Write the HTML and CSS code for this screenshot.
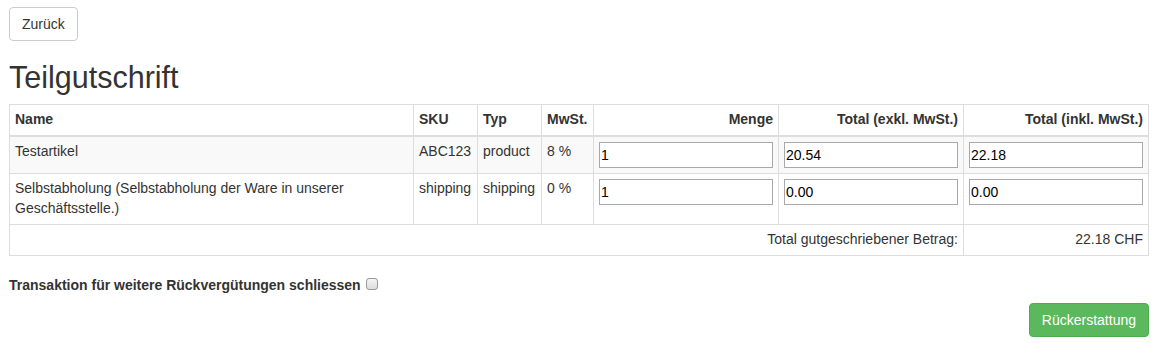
FILE: index.html
```html
<!DOCTYPE html>
<html lang="de">
<head>
  <meta charset="UTF-8" />
  <title>Teilgutschrift</title>
  <link rel="stylesheet" href="styles.css">
</head>
<body>
  <div class="page">
    <a href="#" class="btn btn-default">Zurück</a>

    <h2>Teilgutschrift</h2>

    <table class="refund-table">
      <colgroup>
        <col class="col-name">
        <col class="col-sku">
        <col class="col-type">
        <col class="col-tax">
        <col class="col-qty">
        <col class="col-total">
        <col class="col-total">
      </colgroup>
      <thead>
        <tr>
          <th>Name</th>
          <th>SKU</th>
          <th>Typ</th>
          <th>MwSt.</th>
          <th class="right">Menge</th>
          <th class="right">Total (exkl. MwSt.)</th>
          <th class="right">Total (inkl. MwSt.)</th>
        </tr>
      </thead>
      <tbody>
        <tr>
          <td>Testartikel</td>
          <td>ABC123</td>
          <td>product</td>
          <td>8 %</td>
          <td><input type="text" value="1"></td>
          <td><input type="text" value="20.54"></td>
          <td><input type="text" value="22.18"></td>
        </tr>
        <tr>
          <td>Selbstabholung (Selbstabholung der Ware in unserer Geschäftsstelle.)</td>
          <td>shipping</td>
          <td>shipping</td>
          <td>0 %</td>
          <td><input type="text" value="1"></td>
          <td><input type="text" value="0.00"></td>
          <td><input type="text" value="0.00"></td>
        </tr>
        <tr class="sum-row">
          <td colspan="6" class="right">Total gutgeschriebener Betrag:</td>
          <td class="right">22.18 CHF</td>
        </tr>
      </tbody>
    </table>

    <div class="close-option">
      <label>Transaktion für weitere Rückvergütungen schliessen <input type="checkbox"></label>
    </div>

    <div class="actions">
      <button class="btn btn-success">Rückerstattung</button>
    </div>
  </div>
</body>
</html>
```

FILE: styles.css
```css
* {
  box-sizing: border-box;
}

body {
  margin: 0;
  font-family: "Liberation Sans", Arial, sans-serif;
  font-size: 14px;
  line-height: 1.42857;
  color: #333;
  background: #fff;
}

.page {
  padding: 7px 7px 0 9px;
}

.btn {
  display: inline-block;
  padding: 6px 12px;
  font-family: inherit;
  font-size: 14px;
  line-height: 20px;
  border: 1px solid transparent;
  border-radius: 4px;
  text-decoration: none;
  cursor: pointer;
}

.btn-default {
  color: #333;
  background-color: #fff;
  border-color: #ccc;
}

.btn-success {
  color: #fff;
  background-color: #5cb85c;
  border-color: #4cae4c;
}

h2 {
  margin: 20px 0 10px;
  font-size: 30.5px;
  font-weight: 500;
  line-height: 33px;
}

.refund-table {
  width: 100%;
  table-layout: fixed;
  border-collapse: collapse;
  border: 1px solid #ddd;
  margin-bottom: 20px;
}

.col-name { width: 404px; }
.col-sku { width: 64px; }
.col-type { width: 64px; }
.col-tax { width: 52px; }
.col-qty { width: 185px; }
.col-total { width: 185px; }

.refund-table th,
.refund-table td {
  padding: 5px;
  border: 1px solid #ddd;
  text-align: left;
  vertical-align: top;
}

.refund-table thead th {
  border-bottom-width: 2px;
  vertical-align: bottom;
  font-weight: bold;
}

.refund-table tbody tr:nth-of-type(odd) {
  background-color: #f9f9f9;
}

.refund-table tbody tr.sum-row {
  background-color: transparent;
}

.refund-table .right {
  text-align: right;
}

.refund-table input {
  display: block;
  width: 100%;
  margin: 0;
  padding: 2px 1px;
  font-family: inherit;
  font-size: 14px;
  line-height: 20px;
  color: #000;
  background: #fff;
  border: 1px solid #a9a9a9;
}

.close-option label {
  display: inline-block;
  font-weight: bold;
  margin-bottom: 5px;
}

.close-option input {
  appearance: none;
  -webkit-appearance: none;
  margin: 0 0 0 1px;
  width: 12px;
  height: 12px;
  vertical-align: 0;
  border: 1px solid #9a9a9a;
  border-radius: 3px;
  background: linear-gradient(#f4f4f4, #dcdcdc);
}

.actions {
  display: flex;
  justify-content: flex-end;
  margin: 2px -1px 0 0;
}
```
